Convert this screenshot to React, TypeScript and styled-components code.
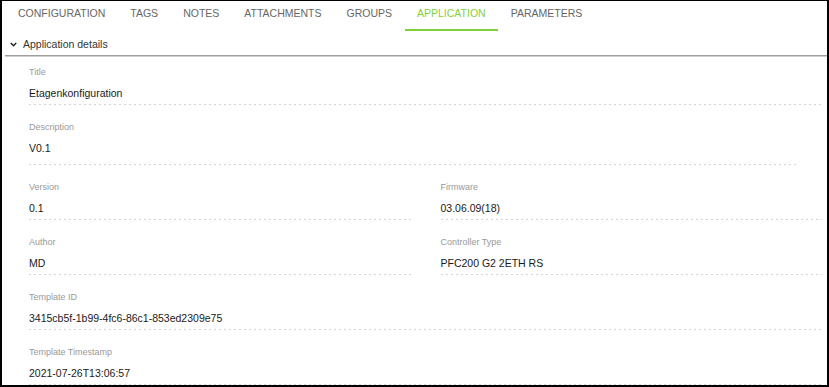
import React from 'react';
import styled, { createGlobalStyle } from 'styled-components';

const GlobalStyle = createGlobalStyle`
  html, body {
    margin: 0;
    padding: 0;
    background: #ffffff;
  }
  body {
    font-family: "Liberation Sans", Arial, sans-serif;
  }
  * {
    box-sizing: border-box;
  }
`;

const Frame = styled.div`
  width: 829px;
  height: 387px;
  border-top: 1px solid #000;
  border-left: 2px solid #000;
  border-right: 2px solid #000;
  border-bottom: 2px solid #000;
  background: #fff;
  overflow: hidden;
`;

const TabBar = styled.nav`
  display: flex;
  padding-left: 3.5px;
`;

const Tab = styled.div<{ $active?: boolean }>`
  padding: 6px 12.5px 10px;
  font-size: 10.5px;
  line-height: 12px;
  text-transform: uppercase;
  color: ${p => (p.$active ? '#7fd13b' : '#666666')};
  border-bottom: 2px solid ${p => (p.$active ? '#7fd13b' : 'transparent')};
  white-space: nowrap;
  cursor: pointer;
`;

const SectionHeader = styled.div`
  display: flex;
  align-items: center;
  gap: 6px;
  margin-left: 3px;
  padding: 6px 0 4px 5px;
  font-size: 10.5px;
  line-height: 14px;
  color: #333333;
  border-bottom: 1px solid #9e9e9e;
  box-shadow: 0 1px 0 #cfcfcf;
`;

const Chevron = styled.svg`
  width: 7px;
  height: 5px;
  flex-shrink: 0;
`;

const Body = styled.div`
  display: grid;
  grid-template-columns: 1fr 1fr;
  column-gap: 30px;
  row-gap: 17px;
  padding: 11px 5px 0 27px;
`;

const Field = styled.div<{ $full?: boolean; $inset?: number; $tall?: boolean }>`
  grid-column: ${p => (p.$full ? '1 / -1' : 'auto')};
  margin-right: ${p => p.$inset ?? 0}px;
  padding-bottom: ${p => (p.$tall ? 10 : 5)}px;
  background-image: repeating-linear-gradient(
    to right,
    #d4d4d4 0 2px,
    transparent 2px 5px
  );
  background-repeat: no-repeat;
  background-position: left bottom;
  background-size: 100% 1px;
`;

const Label = styled.div`
  font-size: 9px;
  line-height: 10px;
  color: #999999;
`;

const Value = styled.div`
  margin-top: 9px;
  font-size: 10.5px;
  line-height: 14px;
  color: #1a1a1a;
`;

const tabs = [
  'Configuration',
  'Tags',
  'Notes',
  'Attachments',
  'Groups',
  'Application',
  'Parameters',
];

type Item = {
  label: string;
  value: string;
  full?: boolean;
  inset?: number;
  tall?: boolean;
};

const fields: Item[] = [
  { label: 'Title', value: 'Etagenkonfiguration', full: true },
  { label: 'Description', value: 'V0.1', full: true, inset: 25, tall: true },
  { label: 'Version', value: '0.1' },
  { label: 'Firmware', value: '03.06.09(18)' },
  { label: 'Author', value: 'MD' },
  { label: 'Controller Type', value: 'PFC200 G2 2ETH RS' },
  { label: 'Template ID', value: '3415cb5f-1b99-4fc6-86c1-853ed2309e75', full: true },
  { label: 'Template Timestamp', value: '2021-07-26T13:06:57', full: true },
];

const App: React.FC = () => {
  return (
    <>
      <GlobalStyle />
      <Frame>
        <TabBar>
          {tabs.map(t => (
            <Tab key={t} $active={t === 'Application'}>
              {t}
            </Tab>
          ))}
        </TabBar>

        <SectionHeader>
          <Chevron viewBox="0 0 7 5">
            <polyline
              points="0.8,0.9 3.5,3.7 6.2,0.9"
              fill="none"
              stroke="#222"
              strokeWidth="1.5"
            />
          </Chevron>
          Application details
        </SectionHeader>

        <Body>
          {fields.map(f => (
            <Field key={f.label} $full={f.full} $inset={f.inset} $tall={f.tall}>
              <Label>{f.label}</Label>
              <Value>{f.value}</Value>
            </Field>
          ))}
        </Body>
      </Frame>
    </>
  );
};

export default App;
